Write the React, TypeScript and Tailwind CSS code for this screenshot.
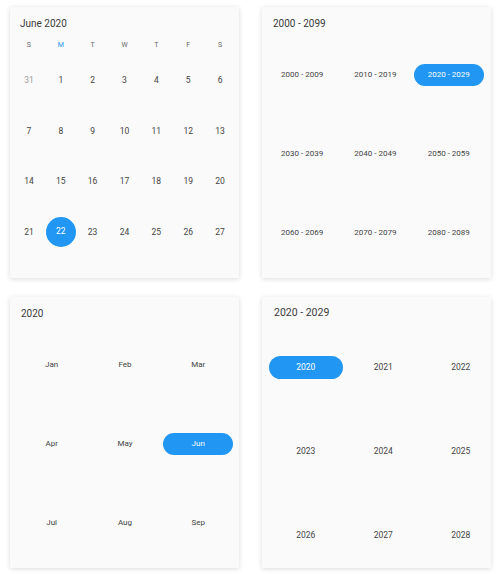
import React from "react";

const font = { fontFamily: "Roboto, 'Liberation Sans', sans-serif" };

function Card({ children }: { children: React.ReactNode }) {
  return (
    <div className="w-[229px] h-[271px] bg-[#fafafa] shadow-[0_1px_5px_rgba(0,0,0,0.14)] overflow-hidden flex flex-col">
      {children}
    </div>
  );
}

function MonthView() {
  const week = ["S", "M", "T", "W", "T", "F", "S"];
  const rows = [
    [31, 1, 2, 3, 4, 5, 6],
    [7, 8, 9, 10, 11, 12, 13],
    [14, 15, 16, 17, 18, 19, 20],
    [21, 22, 23, 24, 25, 26, 27],
  ];
  return (
    <Card>
      <div className="h-[28px] shrink-0 pl-[10px] pt-[11px] text-[10px] leading-[12px] text-[#3a3a3a]">June 2020</div>
      <div className="h-[20px] shrink-0 px-[3px] grid grid-cols-7 items-center">
        {week.map((d, i) => (
          <div key={i} className={`text-center text-[7px] leading-[10px] ${i === 1 ? "text-[#2196f3]" : "text-[#666]"}`}>
            {d}
          </div>
        ))}
      </div>
      <div className="px-[3px] flex flex-col">
        {rows.map((r, ri) => (
          <div key={ri} className="h-[50.5px] grid grid-cols-7 items-center">
            {r.map((n, ci) => {
              const sel = n === 22;
              const other = ri === 0 && n === 31;
              return (
                <div key={ci} className="flex justify-center items-center">
                  {sel ? (
                    <div className="w-[30px] h-[30px] rounded-full bg-[#2196f3] flex items-center justify-center text-[8.5px] text-white">
                      {n}
                    </div>
                  ) : (
                    <span className={`text-[8.5px] leading-[10px] ${other ? "text-[#9e9e9e]" : "text-[#444]"}`}>{n}</span>
                  )}
                </div>
              );
            })}
          </div>
        ))}
      </div>
    </Card>
  );
}

function CellGrid({
  title,
  items,
  selected,
  variant,
}: {
  title: string;
  items: string[];
  selected: string;
  variant: "a" | "b" | "c";
}) {
  const rowH = variant === "c" ? "h-[84px]" : "h-[79.3px]";
  const cols =
    variant === "c"
      ? "grid-cols-[repeat(3,77.5px)] pl-[5px]"
      : variant === "b"
      ? "grid-cols-[repeat(3,73.3px)] pl-[5px]"
      : "grid-cols-[repeat(3,73.3px)] pl-[3.5px]";
  const titleCls =
    variant === "c"
      ? "h-[28px] pl-[12px] pt-[10px] text-[10.5px] leading-[12px]"
      : "h-[28px] pl-[11px] pt-[11px] text-[10px] leading-[12px]";
  const pill = variant === "c" ? "w-[74px] h-[23px] text-[8.5px]" : "w-[70px] h-[22px] text-[8px]";
  const txt = variant === "c" ? "text-[8.5px]" : "text-[8px]";
  const chunks = [items.slice(0, 3), items.slice(3, 6), items.slice(6, 9)];
  return (
    <Card>
      <div className={`${titleCls} shrink-0 text-[#3a3a3a]`}>{title}</div>
      <div className="flex flex-col">
        {chunks.map((r, ri) => (
          <div key={ri} className={`${rowH} grid ${cols} items-center`}>
            {r.map((t) => (
              <div key={t} className="flex justify-center items-center">
                {t === selected ? (
                  <div className={`${pill} rounded-full bg-[#2196f3] text-white flex items-center justify-center`}>{t}</div>
                ) : (
                  <span className={`${txt} leading-[10px] text-[#444] whitespace-nowrap`}>{t}</span>
                )}
              </div>
            ))}
          </div>
        ))}
      </div>
    </Card>
  );
}

export default function App() {
  const decades = [
    "2000 - 2009",
    "2010 - 2019",
    "2020 - 2029",
    "2030 - 2039",
    "2040 - 2049",
    "2050 - 2059",
    "2060 - 2069",
    "2070 - 2079",
    "2080 - 2089",
  ];
  const months = ["Jan", "Feb", "Mar", "Apr", "May", "Jun", "Jul", "Aug", "Sep"];
  const years = ["2020", "2021", "2022", "2023", "2024", "2025", "2026", "2027", "2028"];
  return (
    <div className="w-[501px] h-[574px] bg-white pl-[10px] pt-[7px]" style={font}>
      <div className="grid grid-cols-[229px_229px] gap-x-[23px] gap-y-[19px]">
        <MonthView />
        <CellGrid title="2000 - 2099" items={decades} selected="2020 - 2029" variant="a" />
        <CellGrid title="2020" items={months} selected="Jun" variant="b" />
        <CellGrid title="2020 - 2029" items={years} selected="2020" variant="c" />
      </div>
    </div>
  );
}
